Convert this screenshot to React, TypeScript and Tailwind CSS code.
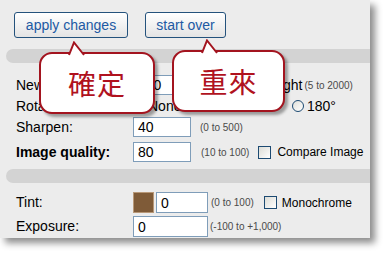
import React from "react";

const FONT = { fontFamily: '"Liberation Sans", Arial, sans-serif' };

function Hint({ children }: { children: React.ReactNode }) {
  return <span className="shrink-0 whitespace-nowrap text-[10px] text-[#4a4a4a]">{children}</span>;
}

function Box({ value, w }: { value: string; w: string }) {
  return (
    <div
      className={`${w} shrink-0 h-full border border-[#7f9db9] bg-white pl-[4px] text-[14px] leading-none flex items-center text-black`}
    >
      {value}
    </div>
  );
}

function Check() {
  return (
    <span className="inline-block shrink-0 w-[13px] h-[13px] border border-[#1c4a72] bg-gradient-to-br from-[#dcdcd6] to-white" />
  );
}

function RadioItem({ label, w }: { label: string; w?: string }) {
  return (
    <span className={`${w ?? ""} shrink-0 flex items-center gap-[3px] whitespace-nowrap`}>
      <span className="inline-block shrink-0 w-[12px] h-[12px] rounded-full border border-[#1c4a72] bg-gradient-to-br from-[#e0e0da] to-white" />
      {label}
    </span>
  );
}

function Callout({
  left,
  top,
  w,
  tailX,
  text,
}: {
  left: string;
  top: string;
  w: string;
  tailX: number;
  text: string;
}) {
  return (
    <div
      className={`absolute ${left} ${top} ${w} h-[62px] rounded-[13px] border-2 border-[#a3141f] bg-white shadow-[3px_3px_3px_rgba(0,0,0,0.35)] flex items-center justify-center`}
    >
      <svg
        className="absolute top-[-13px]"
        style={{ left: tailX }}
        width="18"
        height="15"
        viewBox="0 0 18 15"
      >
        <polygon points="1,15 6,1 16,15" fill="#ffffff" />
        <polyline points="1,14 6,1.5 16,14" fill="none" stroke="#a3141f" strokeWidth="2" />
      </svg>
      <span
        className="text-[28px] leading-none text-[#b0121e] tracking-[1px]"
        style={{ fontFamily: '"Noto Sans CJK TC", "Noto Sans CJK SC", sans-serif' }}
      >
        {text}
      </span>
    </div>
  );
}

export default function App() {
  return (
    <div className="relative w-[385px] h-[255px] bg-white overflow-hidden" style={FONT}>
      <div className="w-[370px] h-[238px] bg-[#ececec] shadow-[5px_5px_7px_rgba(0,0,0,0.45)] flex flex-col whitespace-nowrap">
        {/* buttons */}
        <div className="flex gap-[17px] pl-[14px] pt-[12px]">
          <button className="w-[114px] h-[26px] rounded-[3px] border border-[#24527c] bg-gradient-to-b from-white to-[#e4e4e4] text-[14px] text-[#2159a3]">
            apply changes
          </button>
          <button className="w-[81px] h-[26px] rounded-[3px] border border-[#24527c] bg-gradient-to-b from-white to-[#e4e4e4] text-[14px] text-[#2159a3]">
            start over
          </button>
        </div>

        <div className="mt-[11px] ml-[6px] h-[14px] rounded-l-[7px] bg-[#d3d3d3]" />

        {/* size */}
        <div className="mt-[12px] h-[20px] flex items-center text-[14px] text-black">
          <span className="w-[133px] shrink-0 pl-[16px]">New size:</span>
          <Box value="800" w="w-[58px]" />
          <span className="ml-[71px] shrink-0">Height</span>
          <span className="ml-[2px] flex">
            <Hint>(5 to 2000)</Hint>
          </span>
        </div>

        {/* rotate */}
        <div className="mt-[1px] h-[20px] flex items-center text-[14px] text-black">
          <span className="w-[133px] shrink-0 pl-[16px]">Rotate:</span>
          <RadioItem label="None" w="w-[60px]" />
          <RadioItem label="90°" w="w-[42px]" />
          <RadioItem label="270°" w="w-[57px]" />
          <RadioItem label="180°" />
        </div>

        {/* sharpen */}
        <div className="mt-[1px] h-[20px] flex items-center text-[14px] text-black">
          <span className="w-[133px] shrink-0 pl-[16px]">Sharpen:</span>
          <Box value="40" w="w-[58px]" />
          <span className="ml-[9px] flex">
            <Hint>(0 to 500)</Hint>
          </span>
        </div>

        {/* quality */}
        <div className="mt-[5px] h-[20px] flex items-center text-[14px] text-black">
          <span className="w-[133px] shrink-0 pl-[16px] font-bold">Image quality:</span>
          <Box value="80" w="w-[58px]" />
          <span className="ml-[10px] flex">
            <Hint>(10 to 100)</Hint>
          </span>
          <span className="ml-[9px] flex items-center">
            <Check />
          </span>
          <span className="ml-[6px] text-[12px]">Compare Image</span>
        </div>

        <div className="mt-[7px] ml-[6px] h-[14px] rounded-l-[7px] bg-[#d3d3d3]" />

        {/* tint */}
        <div className="mt-[9px] h-[21px] flex items-center text-[14px] text-black">
          <span className="w-[133px] shrink-0 pl-[16px]">Tint:</span>
          <span className="w-[21px] shrink-0 h-full bg-[#7f5b38] border border-[#b89878]" />
          <span className="ml-[2px] h-full flex">
            <Box value="0" w="w-[52px]" />
          </span>
          <span className="ml-[3px] flex">
            <Hint>(0 to 100)</Hint>
          </span>
          <span className="ml-[10px] flex items-center">
            <Check />
          </span>
          <span className="ml-[5px] text-[12px]">Monochrome</span>
        </div>

        {/* exposure */}
        <div className="mt-[3px] h-[21px] flex items-center text-[14px] text-black">
          <span className="w-[133px] shrink-0 pl-[16px]">Exposure:</span>
          <Box value="0" w="w-[75px]" />
          <span className="ml-[2px] flex">
            <Hint>(-100 to +1,000)</Hint>
          </span>
        </div>
      </div>

      <Callout left="left-[39px]" top="top-[52px]" w="w-[116px]" tailX={27} text="確定" />
      <Callout left="left-[172px]" top="top-[50px]" w="w-[113px]" tailX={27} text="重來" />
    </div>
  );
}
